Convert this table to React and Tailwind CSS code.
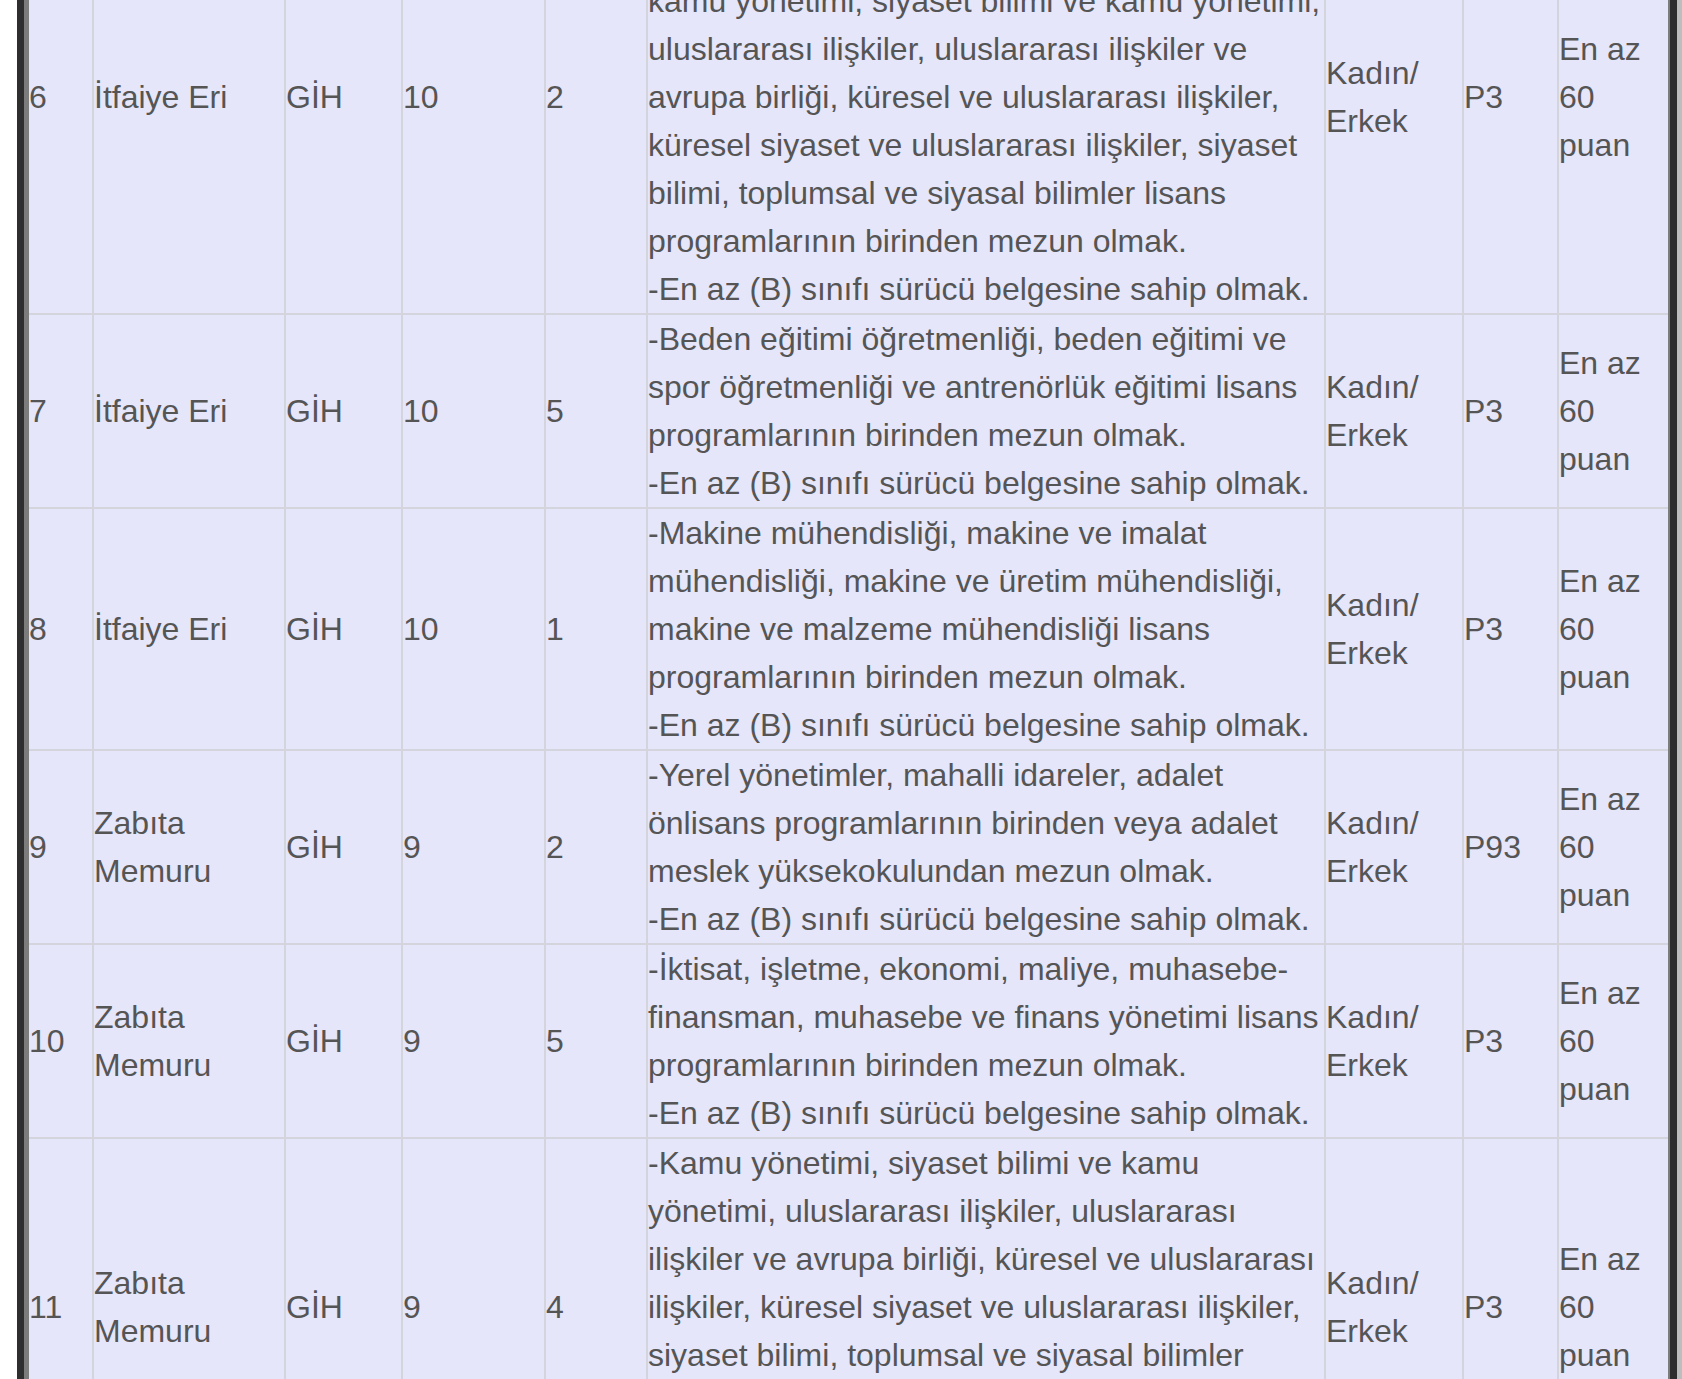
const DRIVER = "-En az (B) sınıfı sürücü belgesine sahip olmak.";

const ROWS = [
  {
    no: "6",
    title: "İtfaiye Eri",
    kind: "GİH",
    grade: "10",
    count: "2",
    desc:
      "-Kamu yönetimi, siyaset bilimi, siyaset bilimi ve kamu yönetimi ve siyaset bilimi, siyaset bilimi, kamu yönetimi, siyaset bilimi ve kamu yönetimi, uluslararası ilişkiler, uluslararası ilişkiler ve avrupa birliği, küresel ve uluslararası ilişkiler, küresel siyaset ve uluslararası ilişkiler, siyaset bilimi, toplumsal ve siyasal bilimler lisans programlarının birinden mezun olmak.",
    gender: "Kadın/ Erkek",
    score: "P3",
    min: "En az 60 puan",
  },
  {
    no: "7",
    title: "İtfaiye Eri",
    kind: "GİH",
    grade: "10",
    count: "5",
    desc:
      "-Beden eğitimi öğretmenliği, beden eğitimi ve spor öğretmenliği ve antrenörlük eğitimi lisans programlarının birinden mezun olmak.",
    gender: "Kadın/ Erkek",
    score: "P3",
    min: "En az 60 puan",
  },
  {
    no: "8",
    title: "İtfaiye Eri",
    kind: "GİH",
    grade: "10",
    count: "1",
    desc:
      "-Makine mühendisliği, makine ve imalat mühendisliği, makine ve üretim mühendisliği, makine ve malzeme mühendisliği lisans programlarının birinden mezun olmak.",
    gender: "Kadın/ Erkek",
    score: "P3",
    min: "En az 60 puan",
  },
  {
    no: "9",
    title: "Zabıta Memuru",
    kind: "GİH",
    grade: "9",
    count: "2",
    desc:
      "-Yerel yönetimler, mahalli idareler, adalet önlisans programlarının birinden veya adalet meslek yüksekokulundan mezun olmak.",
    gender: "Kadın/ Erkek",
    score: "P93",
    min: "En az 60 puan",
  },
  {
    no: "10",
    title: "Zabıta Memuru",
    kind: "GİH",
    grade: "9",
    count: "5",
    desc:
      "-İktisat, işletme, ekonomi, maliye, muhasebe-finansman, muhasebe ve finans yönetimi lisans programlarının birinden mezun olmak.",
    gender: "Kadın/ Erkek",
    score: "P3",
    min: "En az 60 puan",
  },
  {
    no: "11",
    title: "Zabıta Memuru",
    kind: "GİH",
    grade: "9",
    count: "4",
    desc:
      "-Kamu yönetimi, siyaset bilimi ve kamu yönetimi, uluslararası ilişkiler, uluslararası ilişkiler ve avrupa birliği, küresel ve uluslararası ilişkiler, küresel siyaset ve uluslararası ilişkiler, siyaset bilimi, toplumsal ve siyasal bilimler lisans programlarının birinden mezun olmak.",
    gender: "Kadın/ Erkek",
    score: "P3",
    min: "En az 60 puan",
  },
];

function Cell({ first, children }) {
  return (
    <div
      className={`flex items-center border-b-2 border-[#d4d4dc] ${first ? "" : "border-l-2"}`}
    >
      <div className="w-full">{children}</div>
    </div>
  );
}

export default function App() {
  return (
    <div
      className="h-[1379px] overflow-hidden bg-white flex text-[32px] leading-[48px] text-[#555555]"
      style={{ fontFamily: '"Liberation Sans", Arial, sans-serif' }}
    >
      {/* window frame, left */}
      <div className="w-[17px] shrink-0 bg-white" />
      <div className="w-[7px] shrink-0 bg-[#2e2e2e]" />
      <div className="w-[5px] shrink-0 bg-[#7c7c7c]" />

      <div className="flex-1 bg-[#e6e6fa] overflow-hidden">
        <div className="mt-[-119px] grid grid-cols-[63px_192px_117px_143px_102px_678px_138px_95px_111px]">
          {ROWS.map((r) => (
            <div key={r.no} className="contents">
              <Cell first>{r.no}</Cell>
              <Cell>{r.title}</Cell>
              <Cell>{r.kind}</Cell>
              <Cell>{r.grade}</Cell>
              <Cell>{r.count}</Cell>
              <Cell>
                {r.desc}
                <br />
                {DRIVER}
              </Cell>
              <Cell>{r.gender}</Cell>
              <Cell>{r.score}</Cell>
              <Cell>{r.min}</Cell>
            </div>
          ))}
        </div>
      </div>

      {/* window frame, right */}
      <div className="w-[2px] shrink-0 bg-[#7c7c7c]" />
      <div className="w-[7px] shrink-0 bg-[#2e2e2e]" />
      <div className="w-[5px] shrink-0 bg-[#bdbdbd]" />
    </div>
  );
}
